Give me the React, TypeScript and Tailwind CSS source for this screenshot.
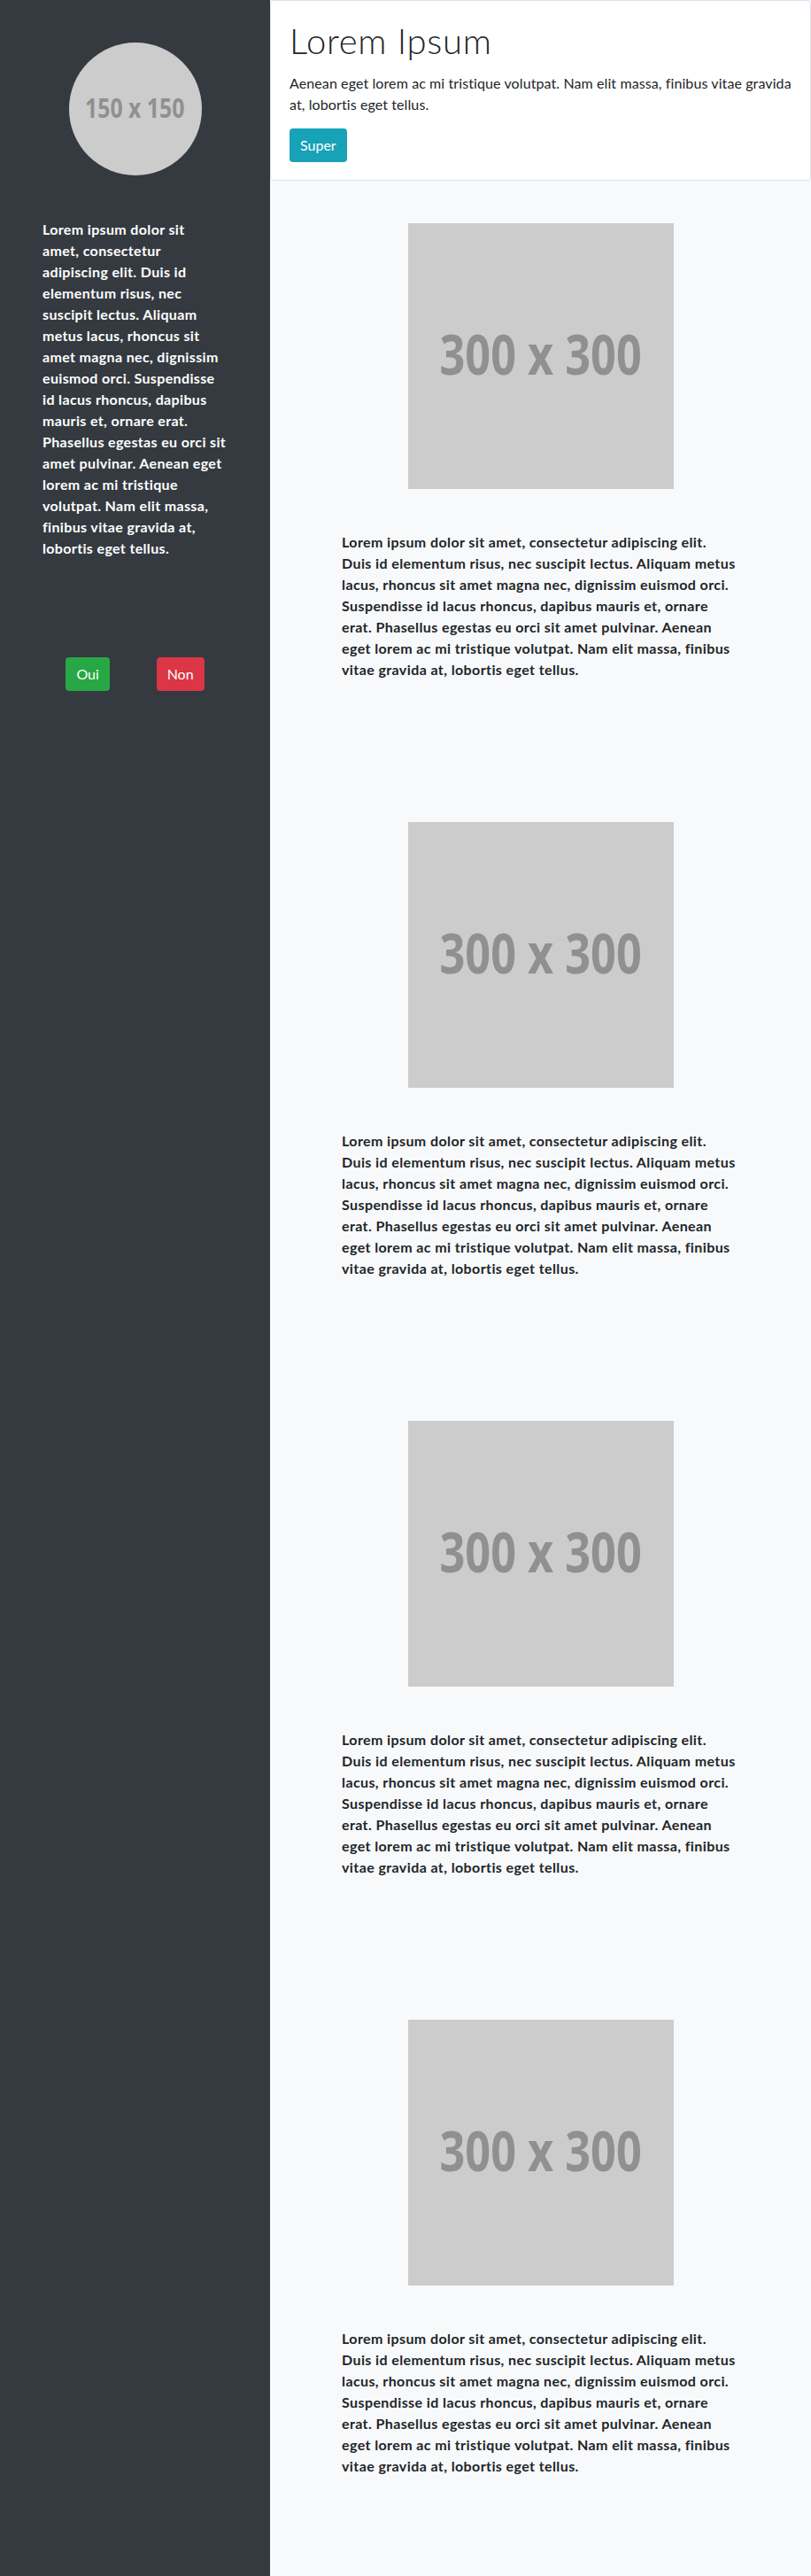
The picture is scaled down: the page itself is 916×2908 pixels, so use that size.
import React from "react";

const sideLines = [
  "Lorem ipsum dolor sit",
  "amet, consectetur",
  "adipiscing elit. Duis id",
  "elementum risus, nec",
  "suscipit lectus. Aliquam",
  "metus lacus, rhoncus sit",
  "amet magna nec, dignissim",
  "euismod orci. Suspendisse",
  "id lacus rhoncus, dapibus",
  "mauris et, ornare erat.",
  "Phasellus egestas eu orci sit",
  "amet pulvinar. Aenean eget",
  "lorem ac mi tristique",
  "volutpat. Nam elit massa,",
  "finibus vitae gravida at,",
  "lobortis eget tellus.",
];

const mainLines = [
  "Lorem ipsum dolor sit amet, consectetur adipiscing elit.",
  "Duis id elementum risus, nec suscipit lectus. Aliquam metus",
  "lacus, rhoncus sit amet magna nec, dignissim euismod orci.",
  "Suspendisse id lacus rhoncus, dapibus mauris et, ornare",
  "erat. Phasellus egestas eu orci sit amet pulvinar. Aenean",
  "eget lorem ac mi tristique volutpat. Nam elit massa, finibus",
  "vitae gravida at, lobortis eget tellus.",
];

function Lines({ lines }: { lines: string[] }) {
  return (
    <>
      {lines.map((l, i) => (
        <span key={i} className="block whitespace-nowrap">
          {l}
        </span>
      ))}
    </>
  );
}

function Section({ first }: { first: boolean }) {
  return (
    <section className={first ? "mt-12" : "mt-[160px]"}>
      <div className="mx-auto flex h-[300px] w-[300px] items-center justify-center bg-[#cccccc]">
        <span className="-mt-[8px] inline-block scale-x-[0.8] font-['Open_Sans',sans-serif] text-[63px] font-bold leading-none text-[#909090]">
          300 x 300
        </span>
      </div>
      <p className="mx-auto mt-12 w-[449px] text-base font-bold leading-6 tracking-[0.4px] text-[#212529]">
        <Lines lines={mainLines} />
      </p>
    </section>
  );
}

export default function App() {
  return (
    <div className="flex min-h-screen font-['Lato',sans-serif] text-[#212529]">
      <aside className="w-[305px] shrink-0 bg-[#343a40] px-12 pt-12 text-white">
        <div className="mx-auto flex h-[150px] w-[150px] items-center justify-center rounded-full bg-[#cccccc]">
          <span className="-mt-[4px] inline-block scale-x-[0.8] font-['Open_Sans',sans-serif] text-[31px] font-bold leading-none text-[#909090]">
            150 x 150
          </span>
        </div>
        <p className="mt-[49px] text-base font-bold leading-6 tracking-[0.35px]">
          <Lines lines={sideLines} />
        </p>
        <div className="mt-[111px] flex justify-around">
          <button className="h-[38px] rounded bg-[#28a745] px-3 text-base leading-6 text-white">
            Oui
          </button>
          <button className="h-[38px] rounded bg-[#dc3545] px-3 text-base leading-6 text-white">
            Non
          </button>
        </div>
      </aside>
      <main className="flex-1 bg-[#f8f9fa] pb-[112px]">
        <header className="h-[204px] rounded border border-[#dee2e6] bg-white px-[21px] pt-[21px]">
          <h1 className="text-[40px] font-light leading-[48px] tracking-[0.7px] text-[#212529]">Lorem Ipsum</h1>
          <p className="mt-3 whitespace-nowrap text-base leading-6 tracking-[0.1px]">
            Aenean eget lorem ac mi tristique volutpat. Nam elit massa, finibus vitae gravida
            <br />
            at, lobortis eget tellus.
          </p>
          <button className="mt-[15px] h-[38px] rounded bg-[#17a2b8] px-3 text-base leading-6 text-white">
            Super
          </button>
        </header>
        <Section first />
        <Section first={false} />
        <Section first={false} />
        <Section first={false} />
      </main>
    </div>
  );
}
